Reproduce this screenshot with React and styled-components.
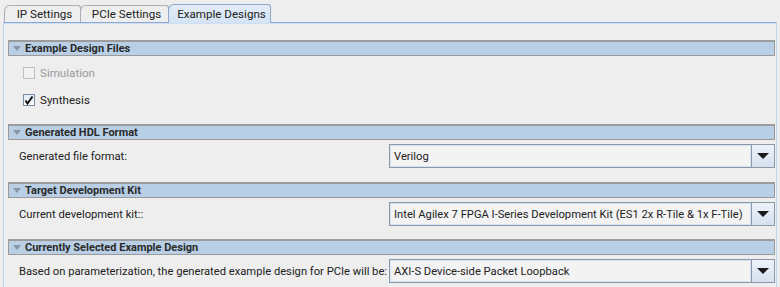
import React from 'react';
import styled, { createGlobalStyle } from 'styled-components';

const Global = createGlobalStyle`
  html, body { margin: 0; padding: 0; background: #eeeeee; }
  body { font-family: Roboto, "Liberation Sans", sans-serif; font-size: 11.2px; color: #222; }
`;

const Page = styled.div`
  width: 780px;
  height: 287px;
  background: #eeeeee;
  overflow: hidden;
`;

const TabBar = styled.div`
  display: flex;
  align-items: flex-end;
  height: 22px;
  padding-left: 4px;
`;

const Tab = styled.div`
  height: ${p => (p.$active ? 19 : 17)}px;
  width: ${p => p.$w}px;
  box-sizing: border-box;
  display: flex;
  align-items: center;
  justify-content: center;
  padding-left: 4px;
  margin-right: -1px;
  border: 1px solid ${p => (p.$active ? '#8fa8cc' : '#a8b0ba')};
  border-bottom: none;
  border-radius: 6px 3px 0 0;
  background: ${p => (p.$active ? 'linear-gradient(#e2ecf7, #d4e3f3)' : '#eeeeee')};
  font-size: 11.6px;
  color: #222;
  z-index: ${p => (p.$active ? 2 : 1)};
  margin-bottom: ${p => (p.$active ? '-1px' : '0')};
`;

const Panel = styled.div`
  margin: 0 3px;
  border-top: 1px solid #8ea7d6;
  border-left: 1px solid #bfd3ea;
  border-right: 1px solid #bfd3ea;
  box-shadow: inset 0 1px 0 #cfdff1;
  padding: 17px 1px 0 4px;
  height: 300px;
`;

const Section = styled.div`
  display: flex;
  flex-direction: column;
  margin-bottom: ${p => p.$gap}px;
`;

const Header = styled.div`
  height: 16px;
  box-sizing: border-box;
  display: flex;
  align-items: center;
  background: #b8cfe5;
  border: 1px solid #9a9a9a;
  border-top: 2px solid #9c9c9c;
  font-weight: bold;
  font-size: 11px;
  color: #2a2a2a;
  padding-left: 4px;
`;

const Arrow = styled.span`
  width: 0;
  height: 0;
  border-left: 4px solid transparent;
  border-right: 4px solid transparent;
  border-top: 5px solid #8a96a3;
  margin-right: 4px;
`;

const CheckRow = styled.label`
  display: flex;
  align-items: center;
  height: 27px;
  padding-left: 15px;
  font-size: 11.6px;
  color: ${p => (p.$disabled ? '#9a9a9a' : '#222')};
`;

const Box = styled.span`
  width: 12px;
  height: 12px;
  box-sizing: border-box;
  border: 1px solid ${p => (p.$disabled ? '#c0c0c0' : '#7b8da3')};
  background: ${p => (p.$disabled ? '#f2f2f2' : 'linear-gradient(#dfe9f5, #ffffff)')};
  margin-right: 5px;
  display: flex;
  align-items: center;
  justify-content: center;
`;

const FieldRow = styled.div`
  display: flex;
  align-items: center;
  justify-content: space-between;
  margin-top: 4px;
  padding-left: 11px;
`;

const Label = styled.span`
  white-space: nowrap;
`;

const Combo = styled.div`
  flex-shrink: 0;
  width: 386px;
  height: 24px;
  box-sizing: border-box;
  display: flex;
  border: 1px solid #8b98a7;
  background: #f3f3f3;
`;

const ComboText = styled.div`
  flex: 1;
  display: flex;
  align-items: center;
  padding-left: 3px;
  border: 1px solid #d5e2f1;
  white-space: nowrap;
  overflow: hidden;
  color: #222;
`;

const ComboButton = styled.div`
  width: 22px;
  display: flex;
  align-items: center;
  justify-content: center;
  border-left: 1px solid #8b98a7;
  background: linear-gradient(#eef3f9, #d4e0ee);
  &::after {
    content: '';
    border-left: 6px solid transparent;
    border-right: 6px solid transparent;
    border-top: 6px solid #1a1a1a;
  }
`;

const Select = ({ value }) => (
  <Combo>
    <ComboText>{value}</ComboText>
    <ComboButton />
  </Combo>
);

const Check = () => (
  <svg width="10" height="10" viewBox="0 0 10 10">
    <path d="M1.5 5.5 L3.5 8.5 L8.5 1.5" stroke="#111" strokeWidth="2" fill="none" />
  </svg>
);

export default function App() {
  return (
    <Page>
      <Global />
      <TabBar>
        <Tab $w={77}>IP Settings</Tab>
        <Tab $w={89}>PCIe Settings</Tab>
        <Tab $w={103} $active>Example Designs</Tab>
      </TabBar>
      <Panel>
        <Section $gap={11}>
          <Header><Arrow />Example Design Files</Header>
          <CheckRow $disabled style={{ marginTop: 3 }}><Box $disabled />Simulation</CheckRow>
          <CheckRow><Box><Check /></Box>Synthesis</CheckRow>
        </Section>
        <Section $gap={14}>
          <Header><Arrow />Generated HDL Format</Header>
          <FieldRow>
            <Label>Generated file format:</Label>
            <Select value="Verilog" />
          </FieldRow>
        </Section>
        <Section $gap={13}>
          <Header><Arrow />Target Development Kit</Header>
          <FieldRow>
            <Label>Current development kit::</Label>
            <Select value="Intel Agilex 7 FPGA I-Series Development Kit (ES1 2x R-Tile & 1x F-Tile)" />
          </FieldRow>
        </Section>
        <Section $gap={0}>
          <Header><Arrow />Currently Selected Example Design</Header>
          <FieldRow>
            <Label>Based on parameterization, the generated example design for PCIe will be:</Label>
            <Select value="AXI-S Device-side Packet Loopback" />
          </FieldRow>
        </Section>
      </Panel>
    </Page>
  );
}
